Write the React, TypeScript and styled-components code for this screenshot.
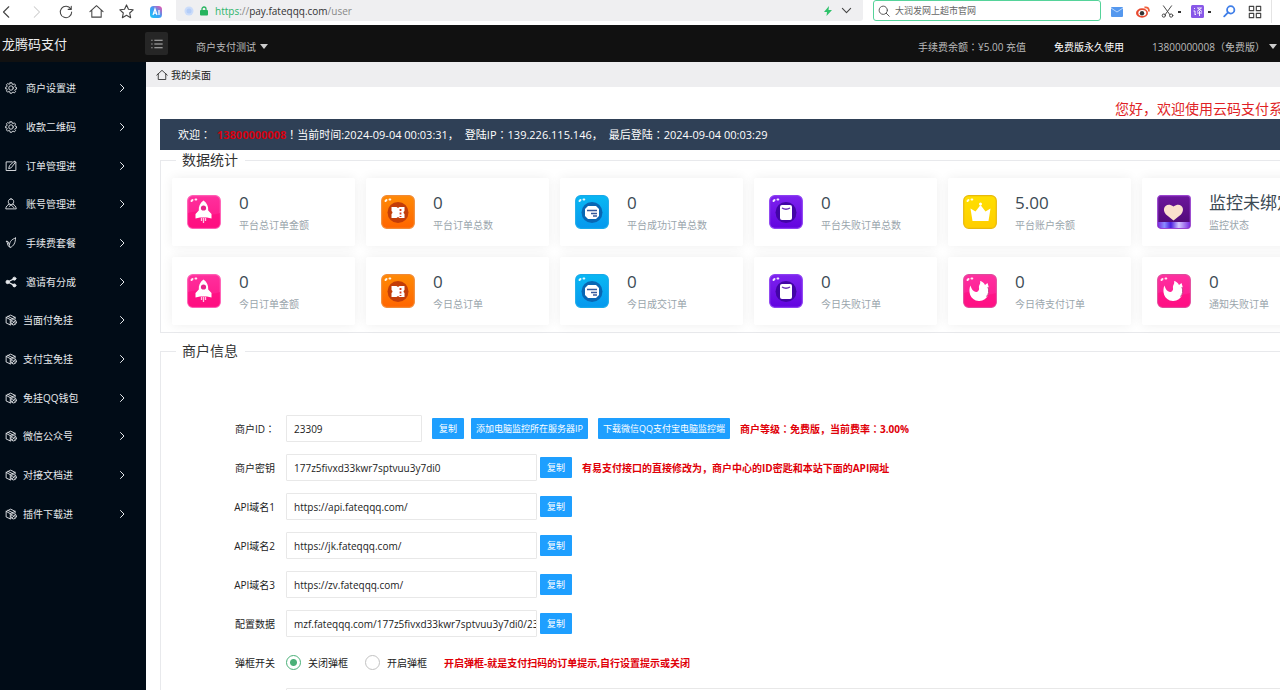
import React, { useState } from 'react';
import styled, { createGlobalStyle } from 'styled-components';

const GlobalStyle = createGlobalStyle`
  * { box-sizing: border-box; }
  body {
    margin: 0;
    background: #fff;
    color: #222;
    font-family: "Open Sans", "Noto Sans CJK SC", sans-serif;
    font-size: 10px;
    line-height: 16px;
    overflow: hidden;
  }
  button, input { font-family: inherit; }
  ul { list-style: none; margin: 0; padding: 0; }
`;

const Page = styled.div`
  display: flex;
  flex-direction: column;
  height: 100vh;
  overflow: hidden;
`;

/* Full-width colons and exclamation marks set in the middle of their square. */
const Punct = styled.span`
  font-family: "Noto Sans CJK TC", sans-serif;
  line-height: 1;
`;

const Cn = ({ text }: { text: string }) => (
  <>{text.split(/([：！])/).map((part, i) => (i % 2 ? <Punct key={i}>{part}</Punct> : part))}</>
);

/* ---------- browser toolbar ---------- */

const Browser = styled.header`
  display: flex;
  align-items: flex-start;
  height: 25px;
  flex: none;
  background: #fff;
  padding-right: 8px;
`;

const NavButtons = styled.div`
  display: flex;
  align-items: center;
  gap: 14px;
  width: 176px;
  height: 23px;
  flex: none;
`;

const IconButton = styled.button<{ $color?: string }>`
  display: flex;
  align-items: center;
  justify-content: center;
  gap: 4px;
  flex: none;
  min-width: 16px;
  height: 20px;
  padding: 0;
  border: 0;
  background: none;
  color: ${p => p.$color ?? '#444'};
`;

const BackButton = styled(IconButton)`
  min-width: 12px;
`;

const AddressBar = styled.div`
  display: flex;
  align-items: center;
  gap: 6px;
  flex: 1;
  height: 21px;
  padding: 0 9px 0 8px;
  border-radius: 0 0 3px 3px;
  background: #efeff1;
`;

const Url = styled.span`
  flex: 1;
  font-size: 10px;
  padding-left: 1px;
  color: #888;
  b { font-weight: 400; color: #333; }
  i { font-style: normal; color: #2eb56c; }
`;

const SearchBox = styled.label`
  display: flex;
  align-items: center;
  gap: 5px;
  width: 228px;
  height: 21px;
  margin-left: 10px;
  padding-left: 4px;
  border: 1px solid #55d39a;
  border-radius: 3px;
  color: #555;
`;

const SearchInput = styled.input`
  flex: 1;
  min-width: 0;
  padding: 0;
  border: 0;
  outline: 0;
  background: none;
  font-size: 9px;
  color: #666;
`;

const Tools = styled.div`
  display: flex;
  align-items: center;
  gap: 10px;
  height: 23px;
  padding: 0 8px;
  border-right: 1px solid #e4e4e4;
`;

const Dot = styled.span`
  width: 3px;
  height: 2px;
  background: #333;
`;

/* ---------- application header ---------- */

const TopBar = styled.div`
  display: flex;
  align-items: center;
  flex: none;
  height: 37px;
  background: #111;
  color: #c4c4c4;
`;

const Logo = styled.div`
  width: 145px;
  padding-left: 2px;
  font-size: 13px;
  color: #eee;
`;

const MenuToggle = styled.button`
  display: flex;
  align-items: center;
  justify-content: center;
  width: 23px;
  height: 23px;
  padding: 0;
  border: 0;
  border-radius: 2px;
  background: #262626;
  color: #ccc;
`;

const TopLink = styled.a<{ $strong?: boolean }>`
  display: flex;
  align-items: center;
  gap: 4px;
  padding-top: 6px;
  white-space: nowrap;
  text-decoration: none;
  color: ${p => (p.$strong ? '#fff' : '#bbb')};
`;

const Caret = styled.span`
  border: 4px solid transparent;
  border-top: 5px solid #ccc;
  border-bottom: 0;
`;

const TopLeft = styled.nav`
  flex: 1;
  display: flex;
  padding-left: 28px;
`;

const TopRight = styled.nav`
  display: flex;
  gap: 28px;
  padding-right: 3px;
`;

/* ---------- body ---------- */

const Body = styled.div`
  display: flex;
  flex: 1;
  min-height: 0;
`;

const Sidebar = styled.nav`
  width: 146px;
  flex: none;
  padding-top: 7px;
  background: #010c17;
`;

const SideList = styled.ul`
  display: flex;
  flex-direction: column;
  height: 464px;
  li { flex: 1; display: flex; }
`;

const SideLink = styled.a<{ $gap: number }>`
  display: flex;
  align-items: center;
  flex: 1;
  gap: ${p => p.$gap}px;
  padding: 0 20px 0 5px;
  color: #e6e9ec;
  text-decoration: none;
  span { flex: 1; }
`;

const Main = styled.main`
  flex: 1;
  min-width: 0;
  overflow: hidden;
`;

const Breadcrumb = styled.div`
  display: flex;
  align-items: center;
  gap: 3px;
  height: 25px;
  padding-left: 10px;
  background: #eeeef0;
  color: #222;
`;

const Content = styled.div`
  min-width: 1205px;
  padding: 14px 14px 0;
`;

const Notice = styled.div`
  height: 18px;
  padding-left: 955px;
  font-size: 14px;
  line-height: 16px;
  white-space: nowrap;
  color: #e01f26;
`;

const Banner = styled.div`
  display: flex;
  gap: 6px;
  height: 31px;
  padding-left: 18px;
  background: #2f4056;
  color: #fff;
  font-size: 11px;
  line-height: 31px;
  white-space: nowrap;
  b { color: #d4000f; }
`;

const Panel = styled.fieldset<{ $gap: number }>`
  margin: 0 0 ${p => p.$gap}px;
  padding: 0 11px 7px;
  border: 1px solid #e8e9ec;
  min-width: 0;
`;

const PanelTitle = styled.legend`
  margin-left: 4px;
  padding: 0 7px 0 6px;
  font-size: 14px;
  line-height: 20px;
  color: #333;
`;

const Cards = styled.div`
  display: grid;
  grid-template-columns: repeat(6, 1fr);
  gap: 11px;
  padding-top: 8px;
`;

const Card = styled.article`
  display: flex;
  align-items: center;
  gap: 18px;
  height: 68px;
  padding-left: 15px;
  border-radius: 2px;
  background: #fff;
  box-shadow: 0 0 12px rgba(0, 0, 0, 0.07);
  white-space: nowrap;
`;

const CardText = styled.div`
  padding-top: 2px;
`;

const CardValue = styled.div`
  font-size: 17px;
  line-height: 24px;
  color: #3c4a54;
`;

const CardLabel = styled.div`
  line-height: 20px;
  color: #9aa5ac;
`;

/* ---------- form ---------- */

const Form = styled.form`
  display: flex;
  flex-direction: column;
  gap: 12px;
  padding-top: 54px;
`;

const Row = styled.div`
  display: flex;
  align-items: center;
  height: 27px;
`;

const FieldLabel = styled.label`
  width: 103px;
  margin-right: 11px;
  text-align: right;
  color: #222;
`;

const TextInput = styled.input<{ $width: number }>`
  width: ${p => p.$width}px;
  height: 27px;
  padding: 0 0 0 7px;
  border: 1px solid #e8e8e8;
  border-radius: 1px;
  outline: 0;
  background: #fff;
  font-size: 10px;
  color: #222;
`;

const Actions = styled.div<{ $offset: number }>`
  display: flex;
  align-items: center;
  gap: 10px;
  margin-left: ${p => p.$offset}px;
`;

const ActionGroup = styled.div`
  display: flex;
  gap: 7px;
`;

const BlueButton = styled.button`
  height: 21px;
  padding: 0 5px;
  min-width: 32px;
  border: 0;
  border-radius: 1px;
  background: #1e9fff;
  color: #fff;
  font-size: 9px;
  line-height: 21px;
  white-space: nowrap;
`;

const Hint = styled.strong`
  color: #e00008;
  font-weight: 700;
  white-space: nowrap;
`;

const RadioLabel = styled.label`
  display: flex;
  align-items: center;
  gap: 7px;
  margin-right: 17px;
`;

const Radio = styled.input`
  appearance: none;
  width: 15px;
  height: 15px;
  margin: 0;
  border: 1px solid #c2c2c2;
  border-radius: 50%;
  background: #fff;
  &:checked {
    border-color: #4bb078;
    background: radial-gradient(circle, #4bb078 3px, #fff 4px);
  }
`;

/* ---------- small icons ---------- */

type SvgProps = { size?: number; box?: number; width?: number; children: React.ReactNode };
const Line = ({ size = 12, box = 16, width = 1.2, children }: SvgProps) => (
  <svg width={size} height={size} viewBox={`0 0 ${box} ${box}`} fill="none" stroke="currentColor"
    strokeWidth={width} strokeLinecap="round" strokeLinejoin="round" aria-hidden="true">{children}</svg>
);

const Chevron = () => (
  <Line size={8} width={2}><path d="M5 1l7 7-7 7" /></Line>
);

const House = ({ size = 14 }: { size?: number }) => (
  <Line size={size} width={1.1}><path d="M1 8.2L8 1.8l7 6.4M3 6.6V14h10V6.6" /></Line>
);

const Gear = () => (
  <Line>
    <path d="M6.8 1h2.4l.4 1.9 1.2.5 1.7-1 1.6 1.7-1 1.6.5 1.2 1.7.4v2.2l-1.7.5-.5 1.2 1 1.6-1.6 1.7-1.7-1-1.2.5L9.2 15H6.8l-.4-1.9-1.2-.5-1.7 1-1.6-1.7 1-1.6-.5-1.200L.8 9.200V7l1.600-.5.5-1.200-1-1.600 1.600-1.700 1.700 1 1.200-.5z" />
    <circle cx="8" cy="8" r="3" />
  </Line>
);

const Edit = () => (
  <Line><path d="M9.500 2.500H1.500v11.500h13V2.500h-2M5 11l1-3.500L12.500 1.500l1.500 1.500L8.500 10z" /></Line>
);

const Person = () => (
  <Line>
    <path d="M8 1.200c-2.200 0-3.600 1.700-3.600 3.800S5.800 9 8 9s3.600-1.900 3.600-4S10.200 1.200 8 1.200zM5.500 8.200C3 9.500 1.200 11.500 1 14.500h14c-.2-3-2-5-4.500-6.300M5.500 11.500L8 9l4 4" />
  </Line>
);

const Leaf = () => (
  <Line><path d="M14 1.500C9.500 2.500 6 6 5.800 11.500L7 14c4.500-2 7-6 7-12.500zM5.600 10L4 6 1.500 5.500l1.500 2 1 4 2.500 2" /></Line>
);

const Share = () => (
  <Line>
    <path d="M12.500 3.500L3.500 8l9 4.500" strokeWidth="1.600" />
    <g fill="currentColor"><circle cx="12.500" cy="3.500" r="2" /><circle cx="3.500" cy="8" r="2.200" /><circle cx="12.500" cy="12.500" r="2" /></g>
  </Line>
);

const Cube = () => (
  <Line>
    <path d="M7 14.500L1.500 12V4.500L7.500 1.500l6 3v2M1.500 4.500l5.500 3 6.500-3M7 7.500v7M4 3.200l6 3" />
    <circle cx="11.500" cy="11" r="3.600" /><path d="M9.500 13l4-4M10 9.500l3 3" />
  </Line>
);

/* ---------- statistic tiles ---------- */

type TileKind = 'rocket' | 'ticket' | 'wallet' | 'bag' | 'crown' | 'heart' | 'swirl';

const tileColors: Record<TileKind, [string, string, string]> = {
  rocket: ['#ff2f9d', '#ff1686', '#ff5db4'],
  ticket: ['#ff8a05', '#ff6500', '#f28a35'],
  wallet: ['#08b8f3', '#0698ee', '#16a9ea'],
  bag: ['#7d22ee', '#6204df', '#8c3ff2'],
  crown: ['#ffdf00', '#ffce00', '#e8b90b'],
  heart: ['#6c169c', '#4c0873', '#9a43cf'],
  swirl: ['#ff2fa0', '#ff168c', '#e14a9c'],
};

const TileArt = ({ kind }: { kind: TileKind }) => {
  switch (kind) {
    case 'rocket':
      return (
        <>
          <path d="M1 18q8-3 16 0t16 0v10q0 5-5 5H6q-5 0-5-5z" fill="#ff087b" opacity=".55" />
          <path d="M16.500 5.500c3.500 2.500 5 6 4.700 10l3.300 3.500v4.500l-4.500-1h-7l-4.500 1V19l3.300-3.500c-.3-4 1.200-7.500 4.700-10z" fill="#fff" />
          <circle cx="16.500" cy="13" r="2.600" fill="#e5258a" />
          <path d="M14.500 23v3M16.500 23v5M18.500 23v3" stroke="#ffc4e2" strokeWidth="1.300" />
        </>
      );
    case 'ticket':
      return (
        <>
          <circle cx="17" cy="17.500" r="10.500" fill="#c33d08" />
          <path d="M10.500 12h5l1.500 1 1.500-1h5v4q-2 1.500 0 3v4h-5L17 22l-1.500 1h-5v-4q2-1.500 0-3z" fill="#fff" />
          <path d="M19.500 14v8" stroke="#d43b22" strokeWidth="1.800" strokeDasharray="2 1.500" />
        </>
      );
    case 'wallet':
      return (
        <>
          <circle cx="17" cy="17.500" r="10.500" fill="#0867b4" />
          <path d="M13 11h8l3 3v7l-3 3h-8l-3-3v-7z" fill="#fff" />
          <path d="M12 15.500h10M16 18.500h6M18 21h4" stroke="#36599c" strokeWidth="1.400" />
        </>
      );
    case 'bag':
      return (
        <>
          <circle cx="17" cy="17.500" r="10.500" fill="#4205a6" />
          <rect x="11" y="10" width="12" height="15" rx="2" fill="#fff" />
          <path d="M13 13q4 2.500 8 0" stroke="#6930b8" strokeWidth="1.400" fill="none" />
        </>
      );
    case 'crown':
      return (
        <>
          <path d="M7.500 13.500l5 3L17.500 10l5 6.500 5-3-2 12.500h-16z" fill="#fff" />
          <circle cx="17.500" cy="9" r="1.500" fill="#fff" />
        </>
      );
    case 'heart':
      return (
        <>
          <linearGradient id="heart-base">
            <stop offset="0" stopColor="#7a2be0" /><stop offset=".2" stopColor="#8a8cff" /><stop offset=".4" stopColor="#4a1ce0" />
            <stop offset=".65" stopColor="#d2c6ff" /><stop offset="1" stopColor="#7a2be0" />
          </linearGradient>
          <path d="M1 27h32v3q0 3-3 3H4q-3 0-3-3z" fill="url(#heart-base)" />
          <path d="M16.500 25.500l-7.500-6C4 14 9 6.500 16.500 11.500 24 6.500 29 14 24 19.500z" fill="#fbe0cd" />
        </>
      );
    case 'swirl':
      return (
        <>
          <path d="M1 19q8-3 16 0t16 0v9q0 5-5 5H6q-5 0-5-5z" fill="#ff087b" opacity=".5" />
          <path d="M7.500 11.500c-2.500 5-1 15 8.500 15.500 9 .2 12-9.500 8.500-18l-2.500 2c-1-2-2.500-3.500-5-4 1 3-1.500 4-1 7 .5 2.500-1.500 4-3 4-3-.5-4.500-3-5.500-6.500z" fill="#fff" />
          <path d="M25 13q2 6-1.500 9.500" stroke="#c0307f" strokeWidth="1" fill="none" />
        </>
      );
  }
};

const Tile = ({ kind }: { kind: TileKind }) => {
  const [top, bottom, edge] = tileColors[kind];
  return (
    <svg width="34" height="34" viewBox="0 0 34 34" aria-hidden="true">
      <defs>
        <linearGradient id={`tile-${kind}`} x1="0" y1="0" x2="0" y2="1">
          <stop offset="0" stopColor={top} /><stop offset="1" stopColor={bottom} />
        </linearGradient>
      </defs>
      <rect x=".7" y=".7" width="32.600" height="32.600" rx={kind === 'heart' ? 3 : 5} fill={`url(#tile-${kind})`} stroke={edge} strokeWidth="1.200" />
      <TileArt kind={kind} />
      {kind !== 'heart' && <path d="M4.500 6l1-1M8.500 4.500h.8" stroke="#fff" strokeWidth="2" strokeLinecap="round" opacity=".9" />}
    </svg>
  );
};

/* ---------- data ---------- */

const menu: { text: string; icon: React.ReactNode; gap?: number }[] = [
  { text: '商户设置进', icon: <Gear /> },
  { text: '收款二维码', icon: <Gear /> },
  { text: '订单管理进', icon: <Edit /> },
  { text: '账号管理进', icon: <Person /> },
  { text: '手续费套餐', icon: <Leaf /> },
  { text: '邀请有分成', icon: <Share /> },
  { text: '当面付免挂', icon: <Cube />, gap: 6 },
  { text: '支付宝免挂', icon: <Cube />, gap: 6 },
  { text: '免挂QQ钱包', icon: <Cube />, gap: 6 },
  { text: '微信公众号', icon: <Cube />, gap: 6 },
  { text: '对接文档进', icon: <Cube />, gap: 6 },
  { text: '插件下载进', icon: <Cube />, gap: 6 },
];

const stats: { kind: TileKind; value: string; label: string }[] = [
  { kind: 'rocket', value: '0', label: '平台总订单金额' },
  { kind: 'ticket', value: '0', label: '平台订单总数' },
  { kind: 'wallet', value: '0', label: '平台成功订单总数' },
  { kind: 'bag', value: '0', label: '平台失败订单总数' },
  { kind: 'crown', value: '5.00', label: '平台账户余额' },
  { kind: 'heart', value: '监控未绑定', label: '监控状态' },
  { kind: 'rocket', value: '0', label: '今日订单金额' },
  { kind: 'ticket', value: '0', label: '今日总订单' },
  { kind: 'wallet', value: '0', label: '今日成交订单' },
  { kind: 'bag', value: '0', label: '今日失败订单' },
  { kind: 'swirl', value: '0', label: '今日待支付订单' },
  { kind: 'swirl', value: '0', label: '通知失败订单' },
];

const fields: { id: string; label: string; value: string; hint?: string }[] = [
  { id: 'key', label: '商户密钥', value: '177z5fivxd33kwr7sptvuu3y7di0', hint: '有易支付接口的直接修改为，商户中心的ID密匙和本站下面的API网址' },
  { id: 'api1', label: 'API域名1', value: 'https://api.fateqqq.com/' },
  { id: 'api2', label: 'API域名2', value: 'https://jk.fateqqq.com/' },
  { id: 'api3', label: 'API域名3', value: 'https://zv.fateqqq.com/' },
  { id: 'config', label: '配置数据', value: 'mzf.fateqqq.com/177z5fivxd33kwr7sptvuu3y7di0/23309' },
];

const BrowserBar = () => (
  <Browser>
    <NavButtons>
      <BackButton aria-label="后退"><Line size={14} width={1.3}><path d="M10 2L4 8l6 6" /></Line></BackButton>
      <IconButton aria-label="前进" $color="#ccc"><Line size={14}><path d="M6 2l6 6-6 6" /></Line></IconButton>
      <IconButton aria-label="刷新"><Line size={14}><path d="M13.500 4.500A6.500 6.500 0 1 0 14.500 8M14 1.500v3.500h-3.500" /></Line></IconButton>
      <IconButton aria-label="主页"><House size={15} /></IconButton>
      <IconButton aria-label="收藏"><Line size={15}><path d="M8 1l2.100 4.600 5 .6-3.700 3.400 1 5L8 12.100l-4.400 2.500 1-5L.9 6.200l5-.6z" /></Line></IconButton>
      <IconButton aria-label="AI">
        <svg width="12" height="12" viewBox="0 0 12 12">
          <defs><linearGradient id="ai" x1="0" y1="1" x2="1" y2="0"><stop offset="0" stopColor="#19c8f7" /><stop offset=".5" stopColor="#3f9df5" /><stop offset="1" stopColor="#fa4ca8" /></linearGradient></defs>
          <rect width="12" height="12" rx="3.500" fill="url(#ai)" />
          <path d="M3 9l2-6 2 6M3.700 7.200h2.600M9 4v5" stroke="#fff" strokeWidth="1.200" fill="none" />
        </svg>
      </IconButton>
    </NavButtons>
    <AddressBar>
      <svg width="10" height="10" viewBox="0 0 10 10"><circle cx="5" cy="5" r="4.500" fill="#cbdcfa" /><circle cx="5" cy="5" r="2.500" fill="#b4cdf8" /></svg>
      <svg width="8" height="10" viewBox="0 0 8 10"><rect y="4" width="8" height="5.500" rx="1" fill="#27b45f" /><path d="M2 4V3a2 2 0 0 1 4 0v1" fill="none" stroke="#27b45f" strokeWidth="1.300" /></svg>
      <Url><i>https</i>://<b>pay.fateqqq.com</b>/user</Url>
      <svg width="8" height="10" viewBox="0 0 8 10"><path d="M5 0L0 6h3L2.500 10 8 4H4.500z" fill="#2fc26b" /></svg>
      <IconButton aria-label="展开"><Line size={11} width={1.6}><path d="M2 5l6 6 6-6" /></Line></IconButton>
    </AddressBar>
    <SearchBox>
      <Line size={12} width={1.3}><circle cx="7" cy="7" r="5.500" /><path d="M11 11l4 4" /></Line>
      <SearchInput aria-label="搜索" defaultValue="大润发网上超市官网" />
    </SearchBox>
    <Tools>
      <IconButton aria-label="邮件">
        <svg width="12" height="10" viewBox="0 0 12 10"><rect width="12" height="10" rx="1" fill="#5598ee" /><path d="M0 1l6 4 6-4" stroke="#b7d6ff" fill="none" /></svg>
      </IconButton>
      <IconButton aria-label="微博">
        <svg width="14" height="12" viewBox="0 0 14 12"><ellipse cx="6" cy="7" rx="6" ry="4.700" fill="#e8492f" /><ellipse cx="6.300" cy="7" rx="4" ry="2.900" fill="#fff" /><circle cx="6" cy="7.300" r="2.200" fill="#333" /><path d="M8.500 1.500q4.500-1 4.500 4" stroke="#f0603c" strokeWidth="1.800" fill="none" /></svg>
      </IconButton>
      <IconButton aria-label="截图">
        <Line size={13}><path d="M3 1l8 11M13 1L5 12" /><circle cx="3.500" cy="13" r="2" /><circle cx="12.500" cy="13" r="2" /></Line><Dot />
      </IconButton>
      <IconButton aria-label="翻译">
        <svg width="13" height="13" viewBox="0 0 13 13"><rect width="13" height="13" rx="1.500" fill="#8858e8" /><path d="M3 3l1 1M2.500 6H4v4l1-1M6 3h4.500L6 6.500M7 3.500l4 3M6 8h5M8.500 6v5" stroke="#fff" fill="none" strokeWidth=".9" /></svg><Dot />
      </IconButton>
      <IconButton aria-label="查找" $color="#3f7ee8"><Line size={13} width={2.2}><circle cx="9.500" cy="6" r="4.500" /><path d="M6 9.500L1.500 14" /></Line></IconButton>
      <IconButton aria-label="应用"><Line size={14} width={1.3}><path d="M1.500 1.500h5v5h-5zM9.500 1.500h5v5h-5zM1.500 9.500h5v5h-5zM9.500 9.500h5v5h-5z" /></Line></IconButton>
    </Tools>
  </Browser>
);

export default function App() {
  const [popup, setPopup] = useState('off');
  return (
    <Page>
      <GlobalStyle />
      <BrowserBar />
      <TopBar>
        <Logo>龙腾码支付</Logo>
        <MenuToggle aria-label="菜单"><Line size={12}><path d="M5 3h10M5 8h10M5 13h10M1 3h.5M1 8h.5M1 13h.5" /></Line></MenuToggle>
        <TopLeft><TopLink href="#">商户支付测试<Caret /></TopLink></TopLeft>
        <TopRight>
          <TopLink href="#"><span><Cn text="手续费余额：¥5.00 充值" /></span></TopLink>
          <TopLink href="#" $strong>免费版永久使用</TopLink>
          <TopLink href="#">13800000008（免费版）<Caret /></TopLink>
        </TopRight>
      </TopBar>
      <Body>
        <Sidebar>
          <SideList>
            {menu.map(item => (
              <li key={item.text}>
                <SideLink href="#" $gap={item.gap ?? 9}>{item.icon}<span>{item.text}</span><Chevron /></SideLink>
              </li>
            ))}
          </SideList>
        </Sidebar>
        <Main>
          <Breadcrumb><House size={12} />我的桌面</Breadcrumb>
          <Content>
            <Notice>您好，欢迎使用云码支付系统</Notice>
            <Banner>
              <span><Cn text="欢迎：" /></span>
              <span><b>13800000008</b><Cn text="！当前时间:2024-09-04 00:03:31，" /></span>
              <span><Cn text="登陆IP：139.226.115.146，" /></span>
              <span><Cn text="最后登陆：2024-09-04 00:03:29" /></span>
            </Banner>
            <Panel $gap={8}>
              <PanelTitle>数据统计</PanelTitle>
              <Cards>
                {stats.map(s => (
                  <Card key={s.label}>
                    <Tile kind={s.kind} />
                    <CardText><CardValue>{s.value}</CardValue><CardLabel>{s.label}</CardLabel></CardText>
                  </Card>
                ))}
              </Cards>
            </Panel>
            <Panel $gap={0}>
              <PanelTitle>商户信息</PanelTitle>
              <Form>
                <Row>
                  <FieldLabel htmlFor="mid"><Cn text="商户ID：" /></FieldLabel>
                  <TextInput id="mid" $width={136} defaultValue="23309" />
                  <Actions $offset={10}>
                    <ActionGroup>
                      <BlueButton type="button">复制</BlueButton>
                      <BlueButton type="button">添加电脑监控所在服务器IP</BlueButton>
                    </ActionGroup>
                    <BlueButton type="button">下载微信QQ支付宝电脑监控端</BlueButton>
                    <Hint><Cn text="商户等级：免费版，当前费率：3.00%" /></Hint>
                  </Actions>
                </Row>
                {fields.map(f => (
                  <Row key={f.id}>
                    <FieldLabel htmlFor={f.id}>{f.label}</FieldLabel>
                    <TextInput id={f.id} $width={251} defaultValue={f.value} />
                    <Actions $offset={3}>
                      <BlueButton type="button">复制</BlueButton>
                      {f.hint && <Hint>{f.hint}</Hint>}
                    </Actions>
                  </Row>
                ))}
                <Row role="radiogroup" aria-labelledby="popup">
                  <FieldLabel as="span" id="popup">弹框开关</FieldLabel>
                  <RadioLabel><Radio type="radio" name="popup" checked={popup === 'off'} onChange={() => setPopup('off')} />关闭弹框</RadioLabel>
                  <RadioLabel><Radio type="radio" name="popup" checked={popup === 'on'} onChange={() => setPopup('on')} />开启弹框</RadioLabel>
                  <Hint>开启弹框-就是支付扫码的订单提示,自行设置提示或关闭</Hint>
                </Row>
                <Row>
                  <FieldLabel as="span" />
                  <TextInput aria-label="备注" $width={1000} />
                </Row>
              </Form>
            </Panel>
          </Content>
        </Main>
      </Body>
    </Page>
  );
}
